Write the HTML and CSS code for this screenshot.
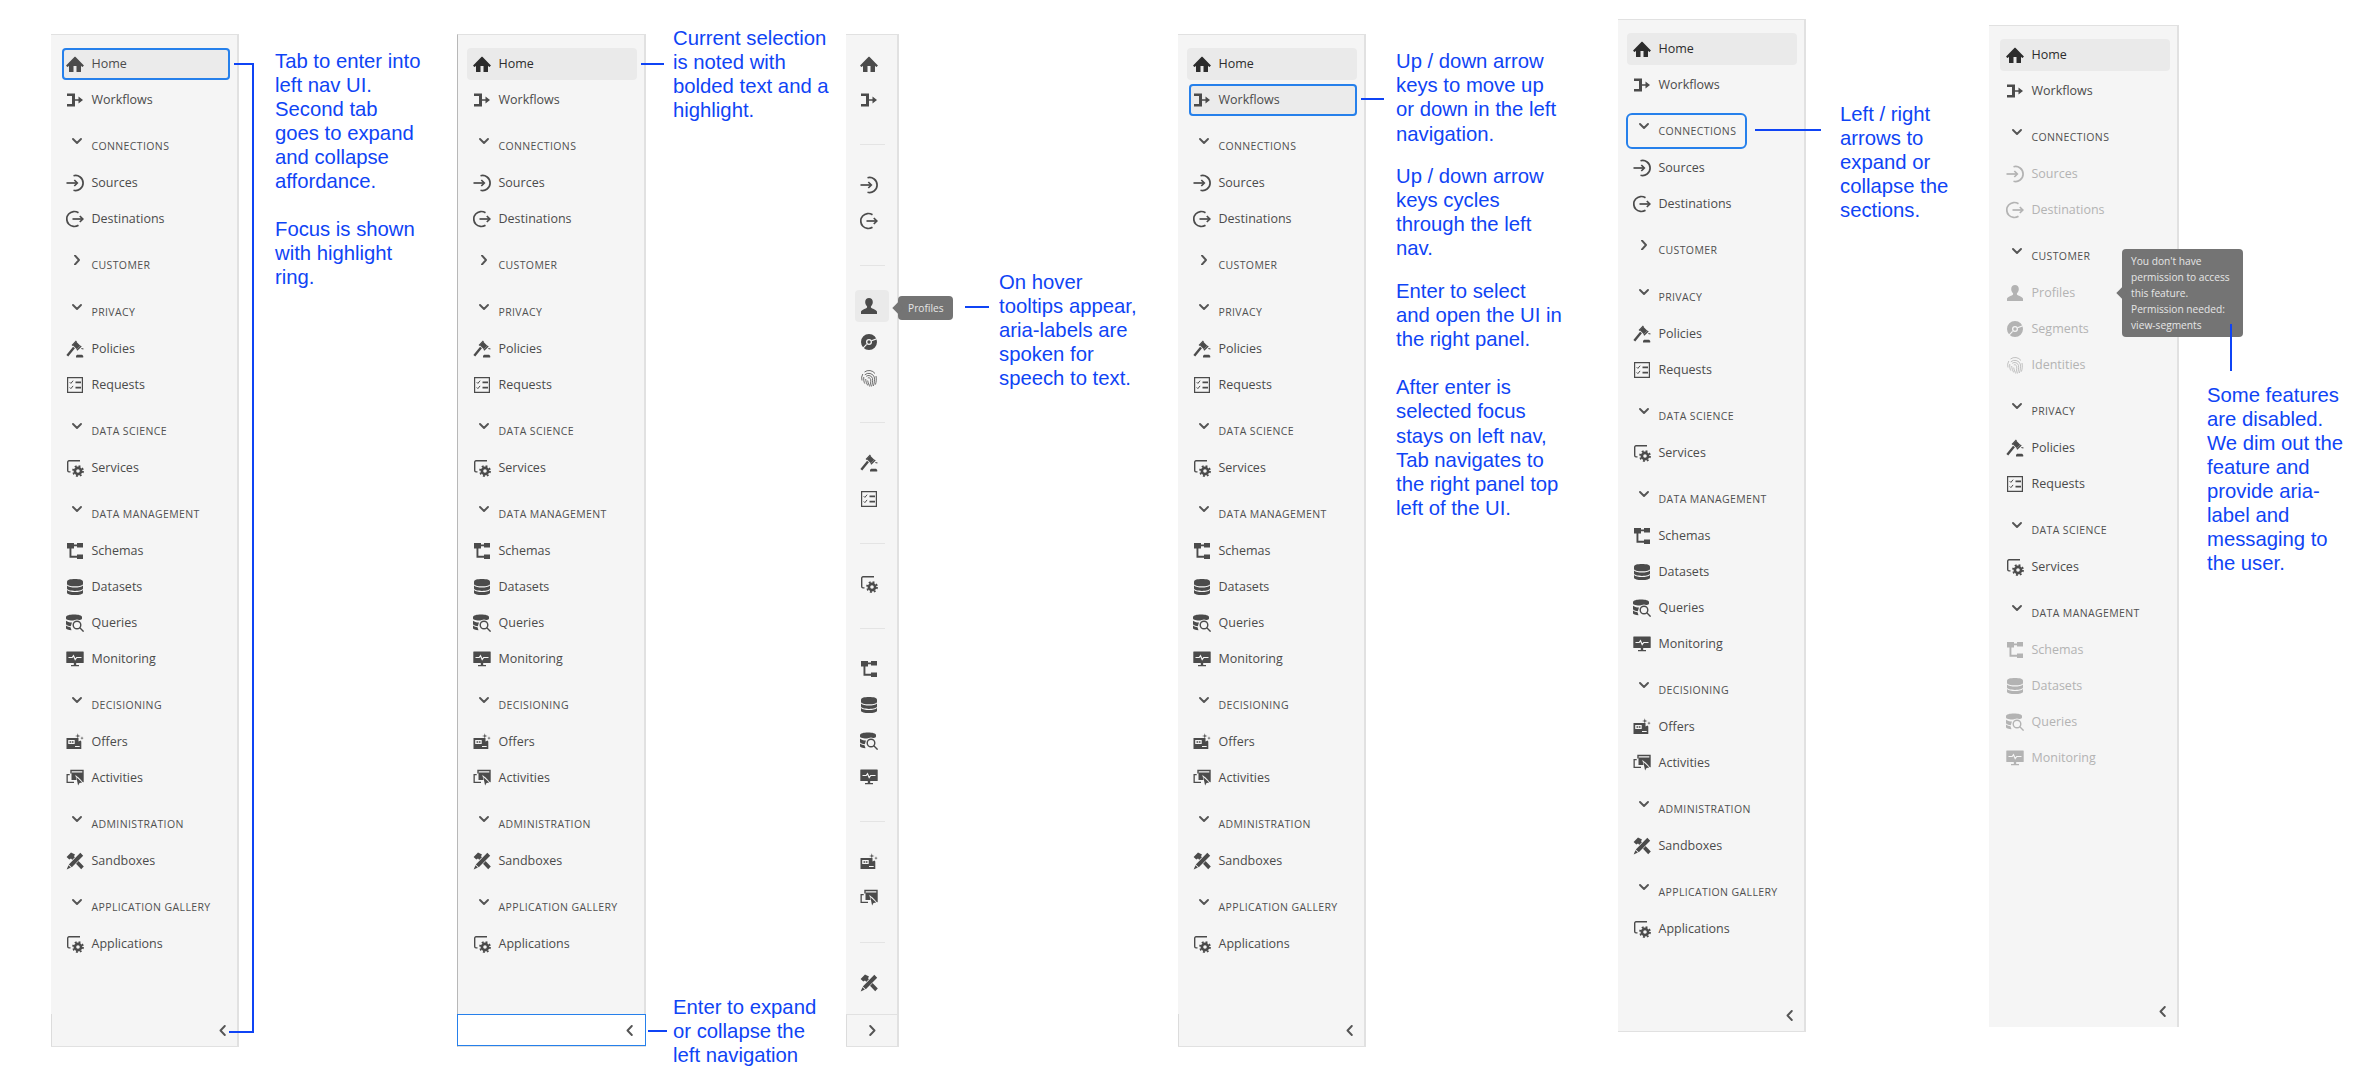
FILE: index.html
```html
<!DOCTYPE html>
<html lang="en">
<head>
<meta charset="utf-8">
<title>Left navigation accessibility notes</title>
<link rel="stylesheet" href="styles.css">
</head>
<body>
<svg class="defs" aria-hidden="true">
  <symbol id="i-home" viewBox="0 0 18 18"><path d="M17.67 10.13 9.38 1.83a.53.53 0 0 0-.75 0L.33 10.13a.53.53 0 0 0 0 .75l.98.98a.5.5 0 0 0 .7 0L3 10.87v5.63a.5.5 0 0 0 .5.5h4v-6h3v6h4a.5.5 0 0 0 .5-.5v-5.63l.99.98a.5.5 0 0 0 .7 0l.98-.98a.53.53 0 0 0 0-.75z"/></symbol>
  <symbol id="i-workflows" viewBox="0 0 18 18"><path d="M1 2.5h8v5.700h3.500V5.600L17 9l-4.500 3.400V9.800H9v5.700H1V13h5V5H1z"/></symbol>
  <symbol id="i-sources" viewBox="0 0 18 18"><g class="ln"><path d="M7.500 1.800A7.500 7.500 0 1 1 7.500 16.200"/><path d="M.5 9H11"/><path d="M8.300 6 11.300 9l-3 3"/></g></symbol>
  <symbol id="i-destinations" viewBox="0 0 18 18"><g class="ln"><path d="M12.500 2.800A7.500 7.500 0 1 0 12.500 15.200"/><path d="M6.500 9h10"/><path d="M13.800 6l3 3-3 3"/></g></symbol>
  <symbol id="i-policies" viewBox="0 0 18 18"><path d="M6.800 5.300 10.300 1.800l4 4-3.500 3.500z"/><path d="M5.600 4.900l4.300-4.300 1 1-4.300 4.300zM10.400 9.700l4.300-4.300 1 1-4.300 4.300z"/><g class="ln stem"><path d="M8 7.500 1.300 15.800"/></g><path d="M10 17.500v-1.300c0-.9.900-1.500 1.800-1.500h3.600c.9 0 1.800.6 1.800 1.500v1.300z"/><path d="M15.500 8l2.100.6-.3 1-2.100-.6z"/></symbol>
  <symbol id="i-requests" viewBox="0 0 18 18"><path fill-rule="evenodd" d="M1 1h16v16H1zM2.200 2.200v13.600h13.600V2.200z"/><path d="M9.500 5.500h5.500v1.800H9.500zM9.500 10.700h5.500v1.800H9.500z"/><g class="ln thin"><path d="M3.700 6.200l1.200 1.200 2.200-2.700M3.700 11.400l1.200 1.200 2.200-2.700"/></g></symbol>
  <symbol id="i-services" viewBox="0 0 18 18"><g class="ln thin2"><path d="M14 1.800H3A1.300 1.300 0 0 0 1.700 3.100v8.500A1.300 1.300 0 0 0 3 12.900h1.500"/></g><g class="gear"><circle cx="12" cy="12" r="3.100"/><circle class="teeth" cx="12" cy="12" r="5"/></g></symbol>
  <symbol id="i-schemas" viewBox="0 0 18 18"><path d="M1 1h7v5.500H5.400v7.300H11v-1.300h6V17h-6v-1.300H3.500V6.500H1zM11 1h6v4.500h-6V4.200H8V2.500h3z"/></symbol>
  <symbol id="i-datasets" viewBox="0 0 18 18"><path d="M1 3.500C1 1.800 4.500 1 9 1s8 .8 8 2.500v2.400c0 1.400-3.600 2.300-8 2.300S1 7.300 1 5.900z"/><path d="M1 7.400c1.500 1.400 4.600 2 8 2s6.500-.6 8-2v3.200c0 1.400-3.600 2.300-8 2.300s-8-.9-8-2.300z"/><path d="M1 12.100c1.500 1.400 4.600 2 8 2s6.500-.6 8-2v2.600C17 16.100 13.400 17 9 17s-8-.9-8-2.300z"/></symbol>
  <symbol id="i-queries" viewBox="0 0 18 18"><path d="M0 3C0 1.400 3.600.5 8 .5s8 .9 8 2.500v1.400c0 1.300-3.600 2.100-8 2.100S0 5.700 0 4.400z"/><path d="M0 6.700c1.500 1.300 4.600 1.800 7 1.900l-2.300 3.700C2.500 12 .6 11.300 0 10.300z"/><path d="M0 11.500c1.300 1.100 3.300 1.600 4.500 1.800l1 3C2.500 16 0 15.100 0 14.200z"/><g class="knock"><circle cx="11" cy="11" r="5.600"/></g><g class="ln thin2"><circle cx="11" cy="11" r="3.800"/><path d="M13.800 13.800l3.800 3.800"/></g></symbol>
  <symbol id="i-monitoring" viewBox="0 0 18 18"><path d="M.8 1.500h16.400a.5.5 0 0 1 .5.5v10.500a.5.5 0 0 1-.5.5H10.200v2H13v1.300H5V15h2.800v-2H.8a.5.5 0 0 1-.5-.5V2a.5.5 0 0 1 .5-.5z"/><g class="cut"><path d="M2.500 7.500h3.700l1.300-1.800 1.700 3.800 1.500-2h4.800"/></g></symbol>
  <symbol id="i-offers" viewBox="0 0 18 18"><path d="M.5 5h12v3.500l2-1 .8 1V16H.5z"/><g class="knock"><path d="M2.200 7h6.500v4H2.200zM9 13h4.700v1H9z"/></g><path d="M3.500 8.200h1.800v1.600H3.500zM6 8.200h1.500v1.600H6zM2 13.300h5.500v.8H2z"/><path d="M11.800.2l.6 2.200 2.200.6-2.200.6-.6 2.200-.6-2.200L9 3l2.200-.6zM16 3.300l.4 1.400 1.400.4-1.400.4-.4 1.400-.4-1.400-1.400-.4 1.400-.4z"/></symbol>
  <symbol id="i-activities" viewBox="0 0 18 18"><g class="ln thin2"><path d="M5 4.500V1.500h12v11h-2.500"/></g><path d="M.5 5h3.200v1.300H1.800v6.400H8V14H.5z"/><path d="M5.500 3.500H17v9.700l-5.500-5.800v3.600H5.500z"/><g class="knock"><path d="M9.300 5.700l8.700 8.500-3.900.3-1.900 3.500z"/></g><path d="M10.300 7.900l5.900 5.700-2.700.3-1.400 2.500z"/></symbol>
  <symbol id="i-sandboxes" viewBox="0 0 18 18"><path d="M5 .5 .6 4.900l2.700 2.500 1.700-1L15.200 17.200 17.800 14.600 8 4.300l1-1.800z"/><g class="knock"><path d="M14.300 0l3.500 3.500L6.200 16 2 12z"/></g><path d="M14.300.8l2.900 2.900L5.800 15.200l-3-2.800zM2.400 13.300l2.500 2.300-4.200 1.900z"/></symbol>
  <symbol id="i-profiles" viewBox="0 0 18 18"><path d="M1 17v-2.200c0-1.800 3.500-2.900 5.600-3.900.7-.4.700-1.300.2-2C5.900 7.800 5.200 6.500 5.200 4.900 5.200 2.500 6.800 1 9 1s3.800 1.500 3.800 3.900c0 1.600-.7 2.900-1.600 4-.5.7-.5 1.600.2 2 2.100 1 5.600 2.100 5.600 3.900V17z"/></symbol>
  <symbol id="i-segments" viewBox="0 0 18 18"><g class="ring"><circle cx="9" cy="9" r="5.500"/></g><circle cx="9" cy="9" r="1.700"/><g class="cut"><path d="M11.500 7.700 18 5.300M6.600 11.400 2.800 15.300"/></g></symbol>
  <symbol id="i-identities" viewBox="0 0 18 18"><g class="ln hair"><path d="M4.500 3A7.500 7.500 0 0 1 15 4.500M2.800 5A7.800 7.800 0 0 0 2 11.500M16 7c.6 2.800.3 6-.6 8.600M4.800 5.800A6 6 0 0 1 14.300 8c.5 3 .1 6.300-1 9M3.800 8c-.3 2.800.1 5 1 6.600M6.200 7.300A4 4 0 0 1 12.500 9.500c.3 2.800-.1 5.800-1.100 8M5.700 10c.1 2.400.8 4.500 2.100 6.500M7.800 9a2 2 0 0 1 2.900 1.500c.2 2.500-.2 4.800-1.100 7M7.700 11.500c.2 1.800.7 3.300 1.500 4.800"/></g></symbol>
  <symbol id="c-down" viewBox="0 0 10 10"><path class="chev" d="M1 3l4 4 4-4"/></symbol>
  <symbol id="c-right" viewBox="0 0 10 10"><path class="chev" d="M3 .5 7 5 3 9.500"/></symbol>
  <symbol id="c-left" viewBox="0 0 7 11"><path class="chev" d="M5.800 1 1.500 5.500 5.800 10"/></symbol>
  <symbol id="c-next" viewBox="0 0 7 11"><path class="chev" d="M1.200 1 5.500 5.500 1.200 10"/></symbol>
</svg>

<main class="board">

  <section class="frame frame-a">
    <nav class="panel">
      <div class="list">
        <div class="item focus lit"><svg class="ic"><use href="#i-home"/></svg><span>Home</span></div>
        <div class="item"><svg class="ic"><use href="#i-workflows"/></svg><span>Workflows</span></div>
        <div class="head"><svg class="ch"><use href="#c-down"/></svg><span>Connections</span></div>
        <div class="item"><svg class="ic"><use href="#i-sources"/></svg><span>Sources</span></div>
        <div class="item"><svg class="ic"><use href="#i-destinations"/></svg><span>Destinations</span></div>
        <div class="head"><svg class="ch"><use href="#c-right"/></svg><span>Customer</span></div>
        <div class="head"><svg class="ch"><use href="#c-down"/></svg><span>Privacy</span></div>
        <div class="item"><svg class="ic"><use href="#i-policies"/></svg><span>Policies</span></div>
        <div class="item"><svg class="ic"><use href="#i-requests"/></svg><span>Requests</span></div>
        <div class="head"><svg class="ch"><use href="#c-down"/></svg><span>Data Science</span></div>
        <div class="item"><svg class="ic"><use href="#i-services"/></svg><span>Services</span></div>
        <div class="head"><svg class="ch"><use href="#c-down"/></svg><span>Data Management</span></div>
        <div class="item"><svg class="ic"><use href="#i-schemas"/></svg><span>Schemas</span></div>
        <div class="item"><svg class="ic"><use href="#i-datasets"/></svg><span>Datasets</span></div>
        <div class="item"><svg class="ic"><use href="#i-queries"/></svg><span>Queries</span></div>
        <div class="item"><svg class="ic"><use href="#i-monitoring"/></svg><span>Monitoring</span></div>
        <div class="head"><svg class="ch"><use href="#c-down"/></svg><span>Decisioning</span></div>
        <div class="item"><svg class="ic"><use href="#i-offers"/></svg><span>Offers</span></div>
        <div class="item"><svg class="ic"><use href="#i-activities"/></svg><span>Activities</span></div>
        <div class="head"><svg class="ch"><use href="#c-down"/></svg><span>Administration</span></div>
        <div class="item"><svg class="ic"><use href="#i-sandboxes"/></svg><span>Sandboxes</span></div>
        <div class="head"><svg class="ch"><use href="#c-down"/></svg><span>Application Gallery</span></div>
        <div class="item"><svg class="ic"><use href="#i-services"/></svg><span>Applications</span></div>
      </div>
      <div class="foot"><svg class="toggle"><use href="#c-left"/></svg></div>
    </nav>
    <div class="notes note-a">
      <p>Tab to enter into<br>left nav UI.<br>Second tab<br>goes to expand<br>and collapse<br>affordance.</p>
      <p class="gap-l">Focus is shown<br>with highlight<br>ring.</p>
    </div>
    <div class="wire bracket"></div>
  </section>

  <section class="frame frame-b">
    <nav class="panel">
      <div class="list">
        <div class="item lit strong"><svg class="ic"><use href="#i-home"/></svg><span>Home</span></div>
        <div class="item"><svg class="ic"><use href="#i-workflows"/></svg><span>Workflows</span></div>
        <div class="head"><svg class="ch"><use href="#c-down"/></svg><span>Connections</span></div>
        <div class="item"><svg class="ic"><use href="#i-sources"/></svg><span>Sources</span></div>
        <div class="item"><svg class="ic"><use href="#i-destinations"/></svg><span>Destinations</span></div>
        <div class="head"><svg class="ch"><use href="#c-right"/></svg><span>Customer</span></div>
        <div class="head"><svg class="ch"><use href="#c-down"/></svg><span>Privacy</span></div>
        <div class="item"><svg class="ic"><use href="#i-policies"/></svg><span>Policies</span></div>
        <div class="item"><svg class="ic"><use href="#i-requests"/></svg><span>Requests</span></div>
        <div class="head"><svg class="ch"><use href="#c-down"/></svg><span>Data Science</span></div>
        <div class="item"><svg class="ic"><use href="#i-services"/></svg><span>Services</span></div>
        <div class="head"><svg class="ch"><use href="#c-down"/></svg><span>Data Management</span></div>
        <div class="item"><svg class="ic"><use href="#i-schemas"/></svg><span>Schemas</span></div>
        <div class="item"><svg class="ic"><use href="#i-datasets"/></svg><span>Datasets</span></div>
        <div class="item"><svg class="ic"><use href="#i-queries"/></svg><span>Queries</span></div>
        <div class="item"><svg class="ic"><use href="#i-monitoring"/></svg><span>Monitoring</span></div>
        <div class="head"><svg class="ch"><use href="#c-down"/></svg><span>Decisioning</span></div>
        <div class="item"><svg class="ic"><use href="#i-offers"/></svg><span>Offers</span></div>
        <div class="item"><svg class="ic"><use href="#i-activities"/></svg><span>Activities</span></div>
        <div class="head"><svg class="ch"><use href="#c-down"/></svg><span>Administration</span></div>
        <div class="item"><svg class="ic"><use href="#i-sandboxes"/></svg><span>Sandboxes</span></div>
        <div class="head"><svg class="ch"><use href="#c-down"/></svg><span>Application Gallery</span></div>
        <div class="item"><svg class="ic"><use href="#i-services"/></svg><span>Applications</span></div>
      </div>
      <div class="foot foot-focus"><svg class="toggle"><use href="#c-left"/></svg></div>
    </nav>
    <div class="notes note-b">
      <p>Current selection<br>is noted with<br>bolded text and a<br>highlight.</p>
      <p class="gap-b">Enter to expand<br>or collapse the<br>left navigation</p>
    </div>
    <div class="wire wire-b1"></div>
    <div class="wire wire-b2"></div>
  </section>

  <section class="frame frame-c">
    <nav class="panel rail">
      <div class="list">
        <div class="cell"><svg class="ic"><use href="#i-home"/></svg></div>
        <div class="cell"><svg class="ic"><use href="#i-workflows"/></svg></div>
        <hr class="rule">
        <div class="cell"><svg class="ic"><use href="#i-sources"/></svg></div>
        <div class="cell"><svg class="ic"><use href="#i-destinations"/></svg></div>
        <hr class="rule">
        <div class="cell lit"><svg class="ic"><use href="#i-profiles"/></svg></div>
        <div class="cell"><svg class="ic"><use href="#i-segments"/></svg></div>
        <div class="cell"><svg class="ic"><use href="#i-identities"/></svg></div>
        <hr class="rule">
        <div class="cell"><svg class="ic"><use href="#i-policies"/></svg></div>
        <div class="cell"><svg class="ic"><use href="#i-requests"/></svg></div>
        <hr class="rule">
        <div class="cell"><svg class="ic"><use href="#i-services"/></svg></div>
        <hr class="rule">
        <div class="cell"><svg class="ic"><use href="#i-schemas"/></svg></div>
        <div class="cell"><svg class="ic"><use href="#i-datasets"/></svg></div>
        <div class="cell"><svg class="ic"><use href="#i-queries"/></svg></div>
        <div class="cell"><svg class="ic"><use href="#i-monitoring"/></svg></div>
        <hr class="rule">
        <div class="cell"><svg class="ic"><use href="#i-offers"/></svg></div>
        <div class="cell"><svg class="ic"><use href="#i-activities"/></svg></div>
        <hr class="rule">
        <div class="cell"><svg class="ic"><use href="#i-sandboxes"/></svg></div>
      </div>
      <div class="foot foot-rail"><svg class="toggle"><use href="#c-next"/></svg></div>
    </nav>
    <div class="notes note-c">
      <p>On hover<br>tooltips appear,<br>aria-labels are<br>spoken for<br>speech to text.</p>
    </div>
    <div class="tip tip-c">Profiles</div>
    <div class="wire wire-c"></div>
  </section>

  <section class="frame frame-d">
    <nav class="panel">
      <div class="list">
        <div class="item lit strong"><svg class="ic"><use href="#i-home"/></svg><span>Home</span></div>
        <div class="item focus"><svg class="ic"><use href="#i-workflows"/></svg><span>Workflows</span></div>
        <div class="head"><svg class="ch"><use href="#c-down"/></svg><span>Connections</span></div>
        <div class="item"><svg class="ic"><use href="#i-sources"/></svg><span>Sources</span></div>
        <div class="item"><svg class="ic"><use href="#i-destinations"/></svg><span>Destinations</span></div>
        <div class="head"><svg class="ch"><use href="#c-right"/></svg><span>Customer</span></div>
        <div class="head"><svg class="ch"><use href="#c-down"/></svg><span>Privacy</span></div>
        <div class="item"><svg class="ic"><use href="#i-policies"/></svg><span>Policies</span></div>
        <div class="item"><svg class="ic"><use href="#i-requests"/></svg><span>Requests</span></div>
        <div class="head"><svg class="ch"><use href="#c-down"/></svg><span>Data Science</span></div>
        <div class="item"><svg class="ic"><use href="#i-services"/></svg><span>Services</span></div>
        <div class="head"><svg class="ch"><use href="#c-down"/></svg><span>Data Management</span></div>
        <div class="item"><svg class="ic"><use href="#i-schemas"/></svg><span>Schemas</span></div>
        <div class="item"><svg class="ic"><use href="#i-datasets"/></svg><span>Datasets</span></div>
        <div class="item"><svg class="ic"><use href="#i-queries"/></svg><span>Queries</span></div>
        <div class="item"><svg class="ic"><use href="#i-monitoring"/></svg><span>Monitoring</span></div>
        <div class="head"><svg class="ch"><use href="#c-down"/></svg><span>Decisioning</span></div>
        <div class="item"><svg class="ic"><use href="#i-offers"/></svg><span>Offers</span></div>
        <div class="item"><svg class="ic"><use href="#i-activities"/></svg><span>Activities</span></div>
        <div class="head"><svg class="ch"><use href="#c-down"/></svg><span>Administration</span></div>
        <div class="item"><svg class="ic"><use href="#i-sandboxes"/></svg><span>Sandboxes</span></div>
        <div class="head"><svg class="ch"><use href="#c-down"/></svg><span>Application Gallery</span></div>
        <div class="item"><svg class="ic"><use href="#i-services"/></svg><span>Applications</span></div>
      </div>
      <div class="foot"><svg class="toggle"><use href="#c-left"/></svg></div>
    </nav>
    <div class="notes note-d">
      <p>Up / down arrow<br>keys to move up<br>or down in the left<br>navigation.</p>
      <p class="gap-s">Up / down arrow<br>keys cycles<br>through the left<br>nav.</p>
      <p class="gap-s">Enter to select<br>and open the UI in<br>the right panel.</p>
      <p class="gap-m">After enter is<br>selected focus<br>stays on left nav,<br>Tab navigates to<br>the right panel top<br>left of the UI.</p>
    </div>
    <div class="wire wire-d"></div>
  </section>

  <section class="frame frame-e">
    <nav class="panel">
      <div class="list">
        <div class="item lit strong"><svg class="ic"><use href="#i-home"/></svg><span>Home</span></div>
        <div class="item"><svg class="ic"><use href="#i-workflows"/></svg><span>Workflows</span></div>
        <div class="head head-focus"><svg class="ch"><use href="#c-down"/></svg><span>Connections</span></div>
        <div class="item"><svg class="ic"><use href="#i-sources"/></svg><span>Sources</span></div>
        <div class="item"><svg class="ic"><use href="#i-destinations"/></svg><span>Destinations</span></div>
        <div class="head"><svg class="ch"><use href="#c-right"/></svg><span>Customer</span></div>
        <div class="head"><svg class="ch"><use href="#c-down"/></svg><span>Privacy</span></div>
        <div class="item"><svg class="ic"><use href="#i-policies"/></svg><span>Policies</span></div>
        <div class="item"><svg class="ic"><use href="#i-requests"/></svg><span>Requests</span></div>
        <div class="head"><svg class="ch"><use href="#c-down"/></svg><span>Data Science</span></div>
        <div class="item"><svg class="ic"><use href="#i-services"/></svg><span>Services</span></div>
        <div class="head"><svg class="ch"><use href="#c-down"/></svg><span>Data Management</span></div>
        <div class="item"><svg class="ic"><use href="#i-schemas"/></svg><span>Schemas</span></div>
        <div class="item"><svg class="ic"><use href="#i-datasets"/></svg><span>Datasets</span></div>
        <div class="item"><svg class="ic"><use href="#i-queries"/></svg><span>Queries</span></div>
        <div class="item"><svg class="ic"><use href="#i-monitoring"/></svg><span>Monitoring</span></div>
        <div class="head"><svg class="ch"><use href="#c-down"/></svg><span>Decisioning</span></div>
        <div class="item"><svg class="ic"><use href="#i-offers"/></svg><span>Offers</span></div>
        <div class="item"><svg class="ic"><use href="#i-activities"/></svg><span>Activities</span></div>
        <div class="head"><svg class="ch"><use href="#c-down"/></svg><span>Administration</span></div>
        <div class="item"><svg class="ic"><use href="#i-sandboxes"/></svg><span>Sandboxes</span></div>
        <div class="head"><svg class="ch"><use href="#c-down"/></svg><span>Application Gallery</span></div>
        <div class="item"><svg class="ic"><use href="#i-services"/></svg><span>Applications</span></div>
      </div>
      <div class="foot foot-plain"><svg class="toggle"><use href="#c-left"/></svg></div>
    </nav>
    <div class="notes note-e">
      <p>Left / right<br>arrows to<br>expand or<br>collapse the<br>sections.</p>
    </div>
    <div class="wire wire-e"></div>
  </section>

  <section class="frame frame-f">
    <nav class="panel panel-short">
      <div class="list">
        <div class="item lit strong"><svg class="ic"><use href="#i-home"/></svg><span>Home</span></div>
        <div class="item"><svg class="ic"><use href="#i-workflows"/></svg><span>Workflows</span></div>
        <div class="head"><svg class="ch"><use href="#c-down"/></svg><span>Connections</span></div>
        <div class="item off"><svg class="ic"><use href="#i-sources"/></svg><span>Sources</span></div>
        <div class="item off"><svg class="ic"><use href="#i-destinations"/></svg><span>Destinations</span></div>
        <div class="head"><svg class="ch"><use href="#c-down"/></svg><span>Customer</span></div>
        <div class="item off"><svg class="ic"><use href="#i-profiles"/></svg><span>Profiles</span></div>
        <div class="item off"><svg class="ic"><use href="#i-segments"/></svg><span>Segments</span></div>
        <div class="item off"><svg class="ic"><use href="#i-identities"/></svg><span>Identities</span></div>
        <div class="head"><svg class="ch"><use href="#c-down"/></svg><span>Privacy</span></div>
        <div class="item"><svg class="ic"><use href="#i-policies"/></svg><span>Policies</span></div>
        <div class="item"><svg class="ic"><use href="#i-requests"/></svg><span>Requests</span></div>
        <div class="head"><svg class="ch"><use href="#c-down"/></svg><span>Data Science</span></div>
        <div class="item"><svg class="ic"><use href="#i-services"/></svg><span>Services</span></div>
        <div class="head"><svg class="ch"><use href="#c-down"/></svg><span>Data Management</span></div>
        <div class="item off"><svg class="ic"><use href="#i-schemas"/></svg><span>Schemas</span></div>
        <div class="item off"><svg class="ic"><use href="#i-datasets"/></svg><span>Datasets</span></div>
        <div class="item off"><svg class="ic"><use href="#i-queries"/></svg><span>Queries</span></div>
        <div class="item off"><svg class="ic"><use href="#i-monitoring"/></svg><span>Monitoring</span></div>
      </div>
      <div class="foot foot-plain"><svg class="toggle"><use href="#c-left"/></svg></div>
    </nav>
    <div class="notes note-f">
      <p>Some features<br>are disabled.<br>We dim out the<br>feature and<br>provide aria-<br>label and<br>messaging to<br>the user.</p>
    </div>
    <div class="tip tip-f">You don't have<br>permission to access<br>this feature.<br>Permission needed:<br>view-segments</div>
    <div class="wire wire-f"></div>
  </section>

</main>
</body>
</html>
```
FILE: styles.css
```css
* { box-sizing: border-box; }
html, body { margin: 0; padding: 0; background: #fff; }
body { width: 2373px; height: 1080px; overflow: hidden; font-family: "Open Sans", "Noto Sans", sans-serif; }
.defs { display: none; }

.board {
  display: grid;
  grid-template-columns: 406px 389px 332px 441px 370px 384px;
  align-items: start;
  padding-left: 51px;
  height: 1080px;
}
.frame { position: relative; display: flex; align-items: flex-start; }
.frame-a, .frame-b, .frame-c, .frame-d { margin-top: 34px; }
.frame-e { margin-top: 19px; margin-left: -1px; }
.frame-f { margin-top: 25px; }

/* nav panel */
.panel {
  flex: none;
  display: flex;
  flex-direction: column;
  width: 188px;
  height: 1013px;
  background: #f5f5f5;
  border-top: 1px solid #e1e1e1;
  border-right: 2px solid #e1e1e1;
  border-bottom: 1px solid #e1e1e1;
  color: #4b4b4b;
}
.frame-b .panel { width: 189px; border-left: 1px solid #b8b8b8; }
.panel-short { width: 190px; height: 1002px; border-bottom: 0; }
.panel-short .item, .panel-short .head { margin-left: 11px; }
.list { flex: 1; display: flex; flex-direction: column; padding-top: 13px; }

.item {
  display: flex;
  flex: none;
  align-items: center;
  gap: 7.5px;
  width: 170px;
  height: 32px;
  margin: 0 0 4px 9px;
  padding-left: 6px;
  border-radius: 4px;
  font-size: 12.5px;
  line-height: 16px;
}
.lit { background: #eaeaea; }
.strong { color: #2c2c2c; }
.focus {
  width: 168px;
  margin-left: 11px;
  padding-left: 4px;
  box-shadow: inset 0 0 0 2px #2680eb;
  background: #ebebeb;
}
.off { color: #b3b3b3; }

.head {
  display: flex;
  flex: none;
  align-items: center;
  gap: 9.5px;
  width: 170px;
  height: 32px;
  margin: 10px 0 5px 9px;
  padding-left: 12px;
  border-radius: 4px;
  color: #505050;
  font-size: 10.5px;
  letter-spacing: .38px;
  text-transform: uppercase;
}
.head span { margin-top: -1px; }
.head-focus { width: 117px; margin-left: 10px; padding-left: 11px; outline: 2px solid #2680eb; }

.ic { flex: none; width: 18px; height: 18px; fill: currentColor; }
.ch { flex: none; width: 10px; height: 10px; margin-bottom: 10px; }
.chev { fill: none; stroke: #555; stroke-width: 1.9; stroke-linecap: round; stroke-linejoin: round; }
.toggle { width: 7px; height: 11px; }

/* icon parts */
.ln { fill: none; stroke: currentColor; stroke-width: 1.7; }
.stem { stroke-width: 2.4; }
.thin { stroke-width: 1; }
.thin2 { stroke-width: 1.4; }
.hair { stroke-width: .8; }
.knock { fill: #f5f5f5; }
.cut { fill: none; stroke: #f5f5f5; stroke-width: 1.2; }
.ring { fill: none; stroke: currentColor; stroke-width: 5; }
.gear { fill: none; stroke: currentColor; }
.gear circle { stroke-width: 2.6; }
.gear .teeth { stroke-width: 1.8; stroke-dasharray: 1.9 2.03; }

/* footer */
.foot {
  flex: none;
  display: flex;
  align-items: center;
  justify-content: flex-end;
  height: 32px;
  padding-right: 11px;
  border-left: 1px solid #dcdcdc;
}
.foot-plain { border-left: 0; }
.foot-focus {
  margin: 0 -2px 0 -1px;
  padding-right: 12px;
  background: #fff;
  border: 1px solid #2680eb;
}
.foot-rail {
  justify-content: center;
  padding-right: 0;
  border-top: 1px solid #e1e1e1;
}

/* collapsed rail */
.rail { width: 53px; height: 1013px; }
.cell {
  display: flex;
  flex: none;
  align-items: center;
  width: 34px;
  height: 32px;
  margin: 0 0 4px 9px;
  padding-left: 5px;
  border-radius: 4px;
}
.rule { flex: none; width: 25px; height: 1px; margin: 24px 0 24px 14px; border: 0; background: #e4e4e4; }

/* notes */
.notes { flex: none; color: #0f44f5; font-family: "Liberation Sans", Arial, sans-serif; font-size: 20.3px; line-height: 24px; }
.notes p { margin: 0; }
.note-a { margin: 15px 0 0 36px; }
.note-a .gap-l { margin-top: 24px; }
.note-b { margin: -8px 0 0 27px; }
.note-b .gap-b { margin-top: 873px; }
.note-c { margin: 236px 0 0 100px; }
.note-d { margin: 15px 0 0 30px; line-height: 24.2px; }
.note-d .gap-s { margin-top: 18px; }
.note-d .gap-m { margin-top: 24px; }
.note-e { margin: 83px 0 0 34px; }
.note-f { margin: 358px 0 0 28px; }

/* tooltips */
.tip {
  position: absolute;
  background: #747474;
  color: #e6e6e6;
  border-radius: 4px;
  font-size: 10.2px;
  line-height: 16px;
  white-space: nowrap;
}
.tip::before {
  content: "";
  position: absolute;
  left: -4px;
  top: 50%;
  width: 8px;
  height: 8px;
  margin-top: -4px;
  background: #747474;
  transform: rotate(45deg);
}
.tip-c { left: 52px; top: 262px; width: 55px; height: 24px; padding: 4px 0 0 10px; }
.tip-f { left: 133px; top: 224px; width: 121px; height: 88px; padding: 4px 8px 0 9px; }

/* connector lines */
.wire { position: absolute; background: #0f44f5; height: 2px; }
.bracket {
  left: 178px;
  top: 29px;
  width: 25px;
  height: 970px;
  background: none;
  border-right: 2px solid #0f44f5;
  border-bottom: 2px solid #0f44f5;
}
.bracket::before { content: ""; position: absolute; left: 5px; right: 0; top: 0; height: 2px; background: #0f44f5; }
.wire-b1 { left: 184px; top: 29px; width: 23px; }
.wire-b2 { left: 191px; top: 996px; width: 19px; }
.wire-c { left: 119px; top: 272px; width: 24px; }
.wire-d { left: 183px; top: 64px; width: 23px; }
.wire-e { left: 137px; top: 110px; width: 66px; }
.wire-f { left: 241px; top: 299px; width: 2px; height: 47px; }
```
